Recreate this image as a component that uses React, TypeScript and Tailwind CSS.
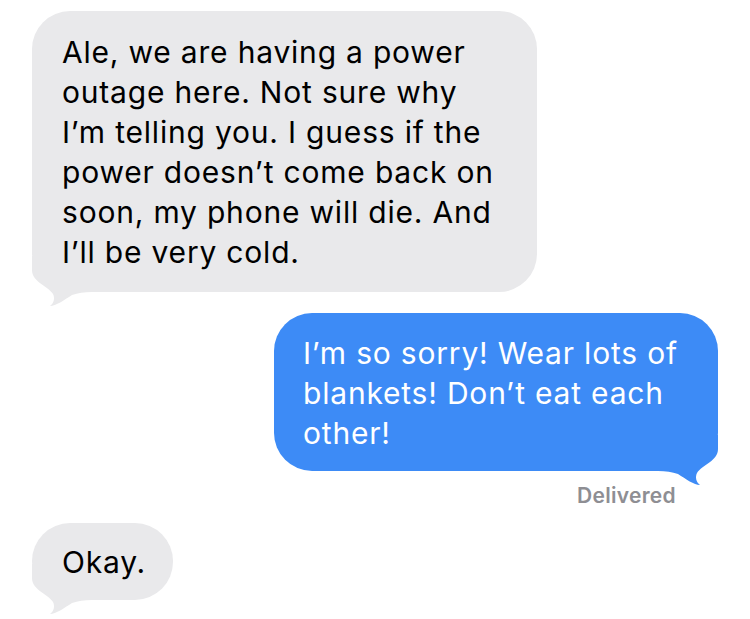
const Tail = ({ color, flip }: { color: string; flip?: boolean }) => (
  <svg
    viewBox="0 0 60 52"
    width="60"
    height="52"
    className={
      "absolute bottom-[-16px] pointer-events-none " +
      (flip ? "left-0 -scale-x-100" : "right-0")
    }
    aria-hidden="true"
  >
    <path
      d="M0 0 H60 V14 C60 26 44 30 39 38 C37 42 38 47 42 50 C36 50 28 44 20 39 C14 37 8 36 0 36 Z"
      fill={color}
    />
  </svg>
);

const App = () => {
  return (
    <main className="w-[750px] h-[619px] bg-white overflow-hidden flex flex-col pt-[11px] font-['Inter','Liberation_Sans',sans-serif] antialiased">
      {/* incoming */}
      <div className="ml-8 relative w-[505px] rounded-[38px] bg-[#e9e9eb] pl-[30px] pt-[21px] pb-[20px] text-[30px] leading-[40px] text-black tracking-[0.8px]">
        <p className="relative z-10">
          Ale, we are having a power
          <br />
          outage here. Not sure why
          <br />
          I’m telling you. I guess if the
          <br />
          power doesn’t come back on
          <br />
          soon, my phone will die. And
          <br />
          I’ll be very cold.
        </p>
        <Tail color="#e9e9eb" flip />
      </div>

      {/* outgoing */}
      <div className="self-end mr-8 mt-[21px] relative w-[444px] rounded-[38px] bg-[#3d8bf6] pl-[29px] pt-[20px] pb-[18px] text-[30px] leading-[40px] text-white tracking-[0.8px]">
        <p className="relative z-10">
          I’m so sorry! Wear lots of
          <br />
          blankets! Don’t eat each
          <br />
          other!
        </p>
        <Tail color="#3d8bf6" />
      </div>

      <p className="self-end mr-[74px] mt-[13px] text-[21px] leading-[24px] font-semibold text-[#8e8e93] tracking-[0.3px]">
        Delivered
      </p>

      {/* incoming */}
      <div className="self-start ml-8 mt-[15px] relative rounded-[38px] bg-[#e9e9eb] pl-[30px] pr-[27px] pt-[19px] pb-[18px] text-[30px] leading-[40px] text-black tracking-[0.8px]">
        <p className="relative z-10">Okay.</p>
        <Tail color="#e9e9eb" flip />
      </div>
    </main>
  );
};

export default App;
